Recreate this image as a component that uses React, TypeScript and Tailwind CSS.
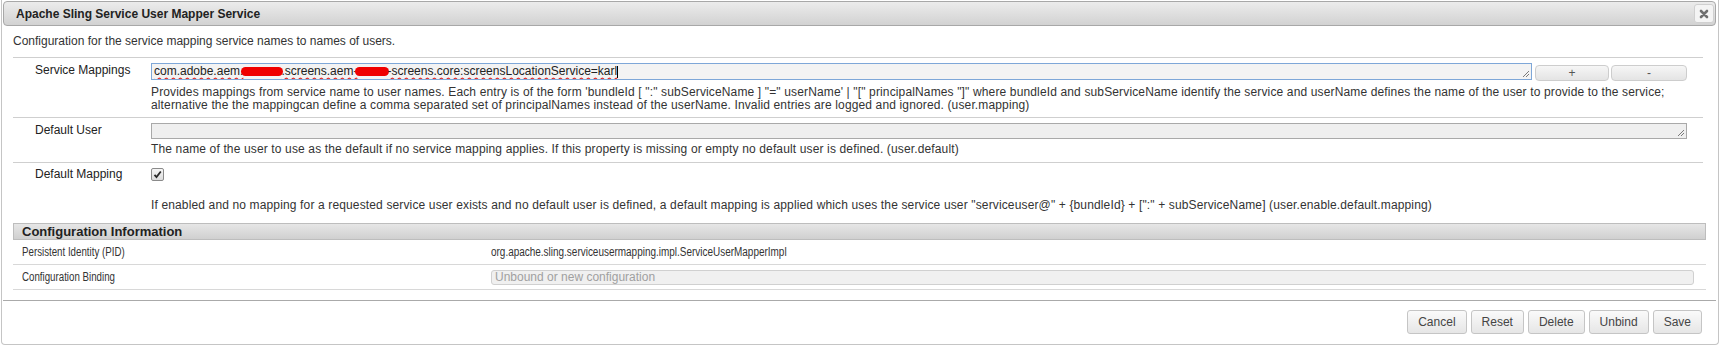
import React from 'react';

function Grip() {
    return (
        <svg className="absolute right-[1px] bottom-[1px]" width="9" height="9" viewBox="0 0 9 9">
            <path d="M8 2L2 8M8 5L5 8" stroke="#7a7a7a" strokeWidth="1" />
        </svg>
    );
}

function Button({ children }: { children: React.ReactNode }) {
    return (
        <button className="h-[24px] px-[10px] rounded-[3px] border border-[#c5c5c5] bg-gradient-to-b from-[#fafafa] to-[#e6e6e6] text-[12px] text-[#454545] leading-none">
            {children}
        </button>
    );
}

function Blob({ w }: { w: string }) {
    return <span className={`inline-block h-[9px] ${w} bg-[#f00000] rounded-full align-middle mx-[-2px]`} />;
}

export default function App() {
    return (
        <div className="w-[1720px] h-[345px] overflow-hidden bg-white font-['Liberation_Sans',Arial,sans-serif] text-[12px] text-[#333]">
            <div className="ml-[1px] w-[1718px] h-[345px] border border-t-0 border-[#c5c5c5] rounded-b-[4px] pl-[1px] pr-[2px] flex flex-col">
                {/* Title bar */}
                <div className="mt-[1px] h-[25px] border border-[#a8a8a8] rounded-[4px] bg-gradient-to-b from-[#ececec] to-[#d2d2d2] flex items-center justify-between pl-[12px] pr-[1px]">
                    <span className="font-bold text-[#222]">Apache Sling Service User Mapper Service</span>
                    <span className="w-[20px] h-[19px] rounded-[3px] border border-[#d0d0d0] bg-[#f4f4f4] flex items-center justify-center">
                        <svg width="10" height="10" viewBox="0 0 10 10">
                            <path d="M2 2L8 8M8 2L2 8" stroke="#6e6e6e" strokeWidth="2.6" strokeLinecap="round" />
                        </svg>
                    </span>
                </div>

                {/* Content */}
                <div className="pl-[10px] pr-[13px]">
                    <p className="pt-[7px] leading-[16px]">Configuration for the service mapping service names to names of users.</p>

                    <div className="mt-[8px] border-t border-[#cfcfcf]">
                        {/* Service Mappings */}
                        <div className="flex border-b border-[#cfcfcf]">
                            <div className="w-[138px] pl-[22px] pt-[5px] leading-[15px] text-[#222]">Service Mappings</div>
                            <div className="flex-1 pt-[5px] pb-[5px] pr-[16px]">
                                <div className="flex items-start">
                                    <div className="relative flex-1 h-[17px] border border-[#7ea7d8] bg-[#f3f3f3] pl-[2px] leading-[15px] text-[#222] whitespace-nowrap overflow-hidden">
                                        <span className="underline decoration-wavy decoration-[#e02020] underline-offset-[2px]">
                                            com.adobe.aem.<Blob w="w-[42px]" />.screens.aem-<Blob w="w-[34px]" />-screens.core:screensLocationService=karl
                                        </span>
                                        <span className="inline-block w-[1px] h-[12px] bg-black align-middle" />
                                        <Grip />
                                    </div>
                                    <button className="mt-[2px] ml-[3px] w-[74px] h-[16px] rounded-[4px] border border-[#cdcdcd] bg-gradient-to-b from-[#f6f6f6] to-[#e4e4e4] text-[#555] leading-none">+</button>
                                    <button className="mt-[2px] ml-[2px] w-[76px] h-[16px] rounded-[4px] border border-[#cdcdcd] bg-gradient-to-b from-[#f6f6f6] to-[#e4e4e4] text-[#555] leading-none">-</button>
                                </div>
                                <div className="mt-[5px] leading-[13px] whitespace-nowrap tracking-[0.14px]">
                                    <div>Provides mappings from service name to user names. Each entry is of the form 'bundleId [ ":" subServiceName ] "=" userName' | "[" principalNames "]" where bundleId and subServiceName identify the service and userName defines the name of the user to provide to the service;</div>
                                    <div>alternative the the mappingcan define a comma separated set of principalNames instead of the userName. Invalid entries are logged and ignored. (user.mapping)</div>
                                </div>
                            </div>
                        </div>

                        {/* Default User */}
                        <div className="flex border-b border-[#cfcfcf]">
                            <div className="w-[138px] pl-[22px] pt-[5px] leading-[15px] text-[#222]">Default User</div>
                            <div className="flex-1 pt-[5px] pb-[6px] pr-[16px]">
                                <div className="relative h-[16px] border border-[#a9a9a9] bg-[#efefef]">
                                    <Grip />
                                </div>
                                <div className="mt-[4px] leading-[13px] whitespace-nowrap tracking-[0.14px]">
                                    The name of the user to use as the default if no service mapping applies. If this property is missing or empty no default user is defined. (user.default)
                                </div>
                            </div>
                        </div>

                        {/* Default Mapping */}
                        <div className="flex">
                            <div className="w-[138px] pl-[22px] pt-[4px] leading-[15px] text-[#222]">Default Mapping</div>
                            <div className="flex-1 pt-[5px] pr-[16px]">
                                <span className="flex items-center justify-center w-[13px] h-[13px] rounded-[2px] border border-[#8a8a8a] bg-gradient-to-b from-[#f6f6f6] to-[#dcdcdc]">
                                    <svg width="9" height="9" viewBox="0 0 9 9">
                                        <path d="M1.5 4.8L3.5 7L7.8 1.5" fill="none" stroke="#2a2a2a" strokeWidth="1.8" />
                                    </svg>
                                </span>
                                <div className="mt-[18px] leading-[13px] whitespace-nowrap tracking-[0.14px]">
                                    If enabled and no mapping for a requested service user exists and no default user is defined, a default mapping is applied which uses the service user "serviceuser@" + {'{bundleId}'} + [":" + subServiceName] (user.enable.default.mapping)
                                </div>
                            </div>
                        </div>
                    </div>

                    {/* Configuration Information */}
                    <div className="mt-[11px] -mr-[3px]">
                        <div className="h-[17px] border border-[#bdbdbd] bg-gradient-to-b from-[#e6e6e6] to-[#d0d0d0] pl-[8px] leading-[15px] font-bold text-[13px] text-[#222]">
                            Configuration Information
                        </div>
                        <div className="h-[25px] flex items-center border-b border-[#d8d8d8]">
                            <div className="w-[478px] pl-[9px]">
                                <span className="inline-block origin-left scale-x-[0.81] whitespace-nowrap">Persistent Identity (PID)</span>
                            </div>
                            <span className="inline-block origin-left scale-x-[0.83] whitespace-nowrap">org.apache.sling.serviceusermapping.impl.ServiceUserMapperImpl</span>
                        </div>
                        <div className="h-[25px] flex items-center border-b border-[#d8d8d8]">
                            <div className="w-[478px] pl-[9px]">
                                <span className="inline-block origin-left scale-x-[0.81] whitespace-nowrap">Configuration Binding</span>
                            </div>
                            <div className="flex-1 mr-[12px] h-[15px] rounded-[3px] border border-[#d0d0d0] bg-[#f0f0f0] pl-[3px] leading-[13px] text-[#a0a0a0]">
                                Unbound or new configuration
                            </div>
                        </div>
                    </div>
                </div>

                {/* Button pane */}
                <div className="mt-[10px] border-t border-[#aaaaaa] pt-[9px] pr-[14px] flex justify-end gap-[4px]">
                    <Button>Cancel</Button>
                    <Button>Reset</Button>
                    <Button>Delete</Button>
                    <Button>Unbind</Button>
                    <Button>Save</Button>
                </div>
            </div>
        </div>
    );
}
